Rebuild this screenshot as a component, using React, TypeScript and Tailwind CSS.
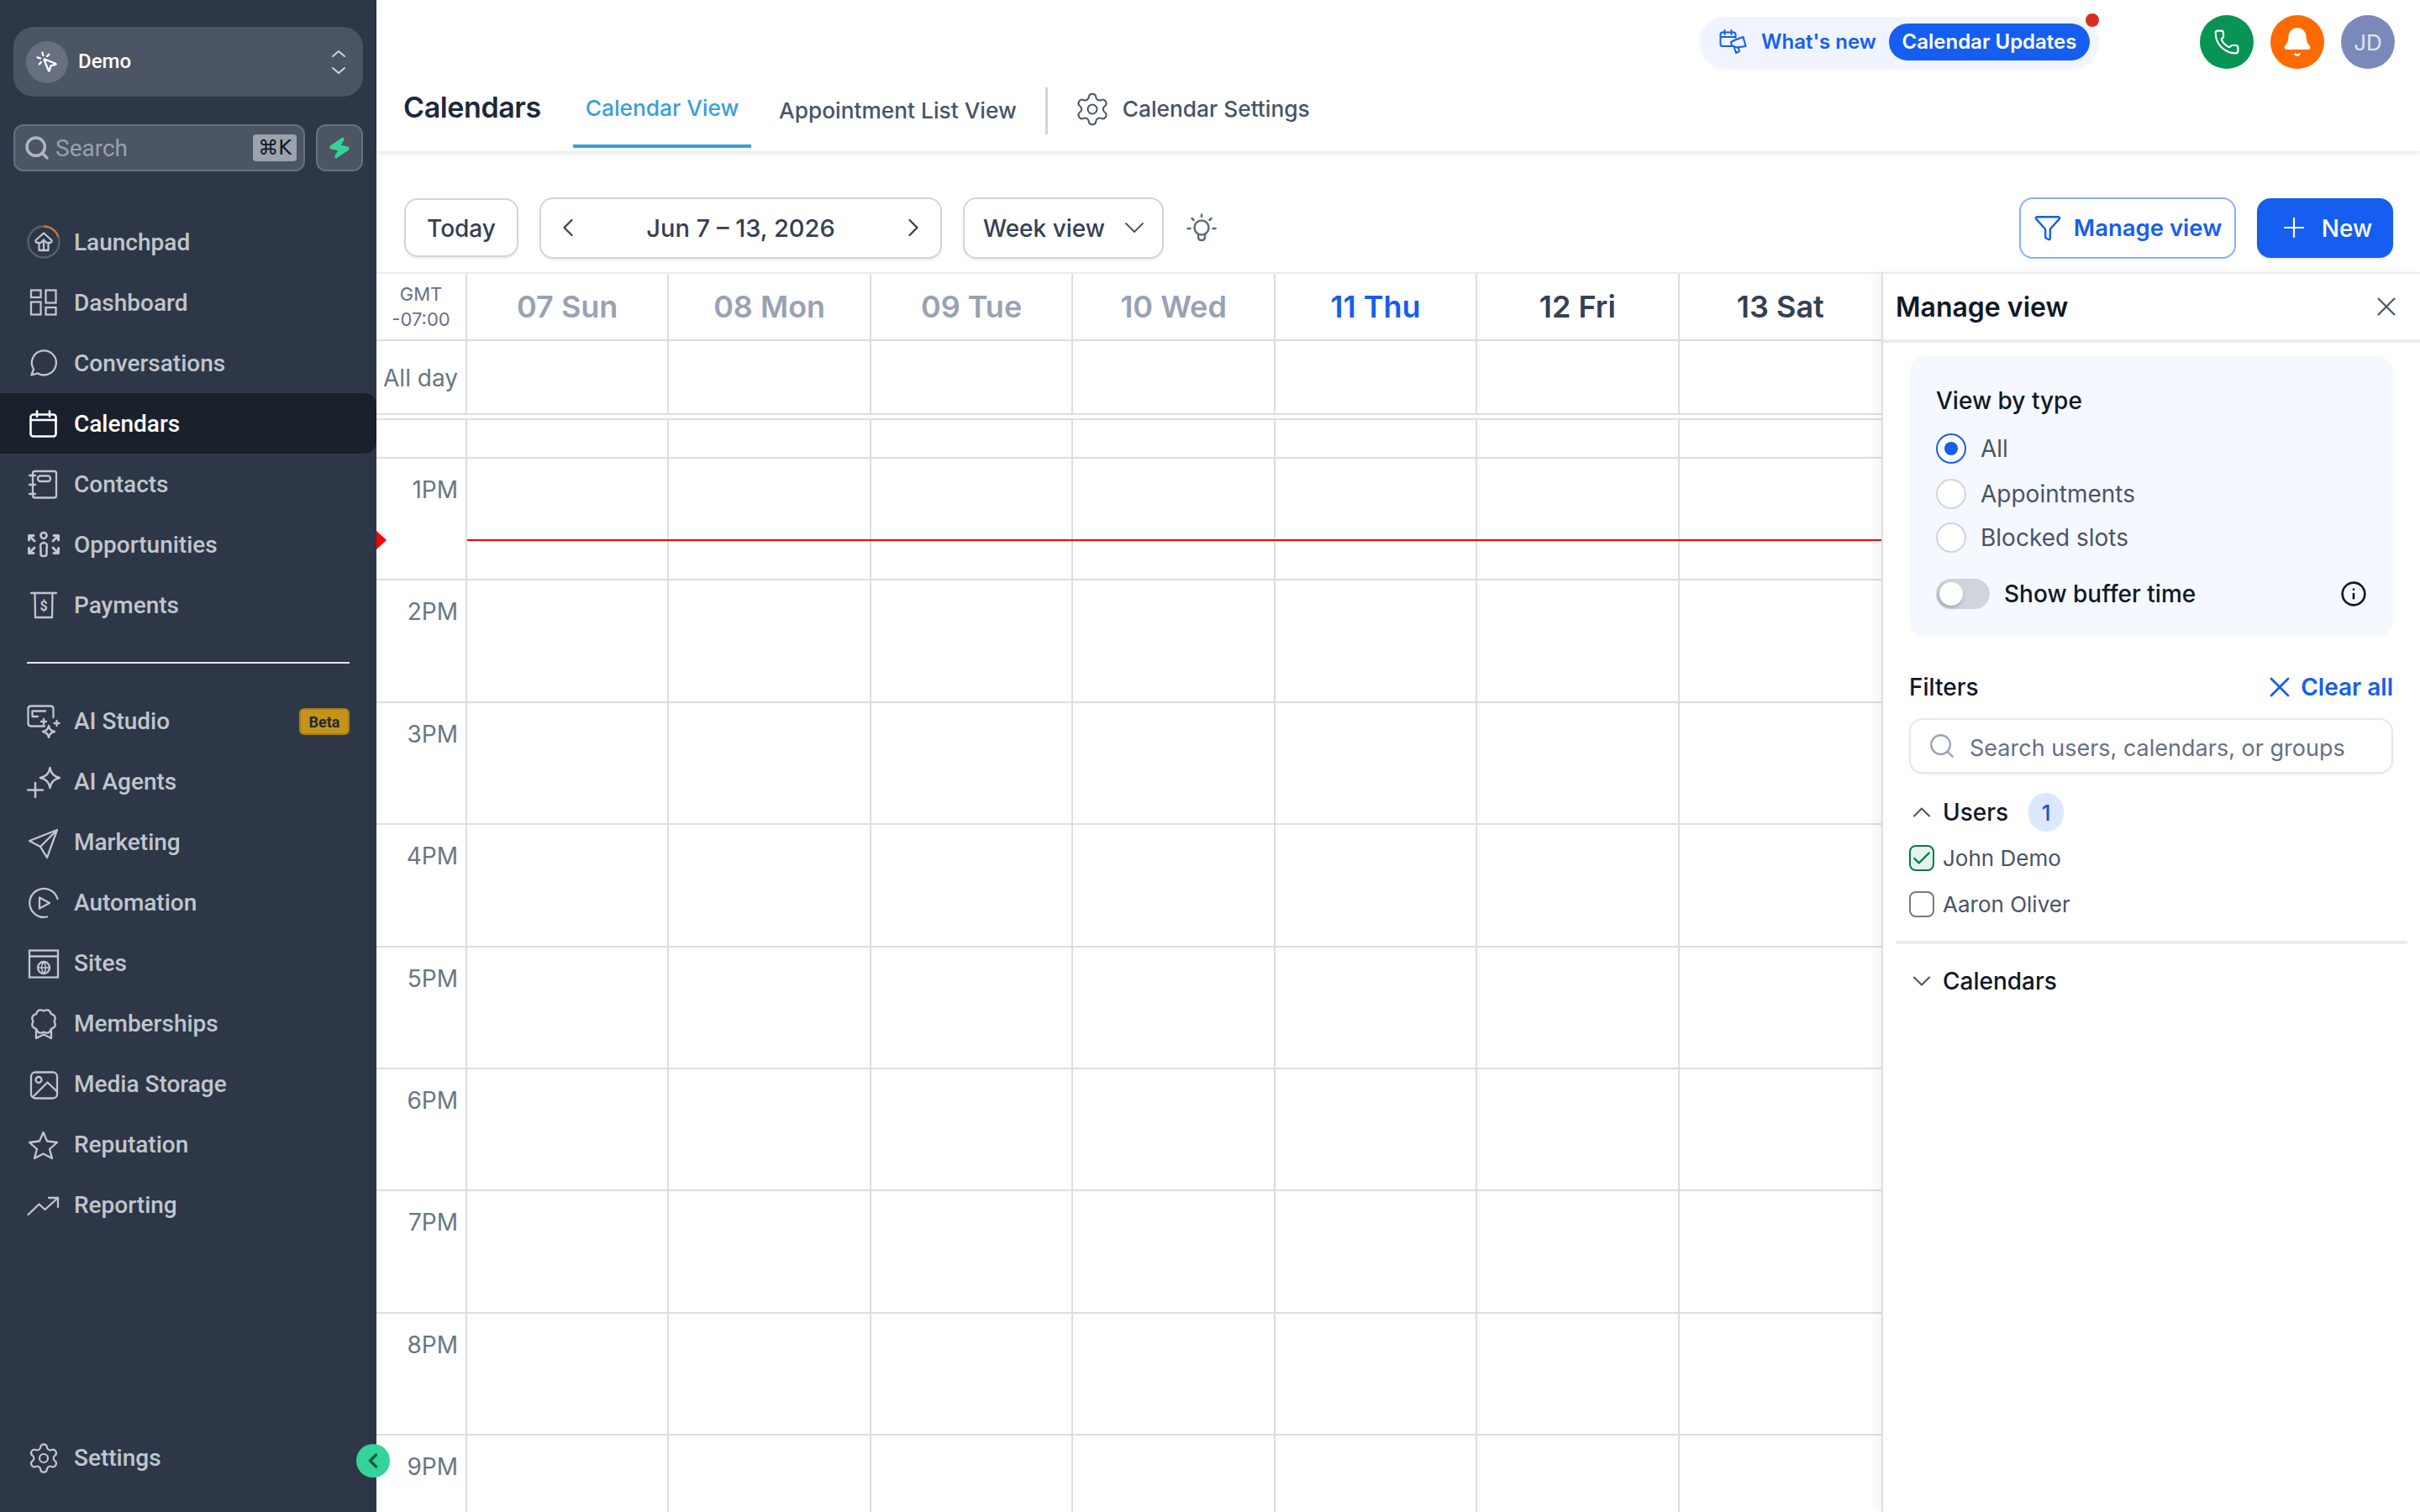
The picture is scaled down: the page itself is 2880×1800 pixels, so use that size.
import type { ReactNode } from 'react'
import {
  Bell, Check, ChevronDown, ChevronLeft, ChevronRight, ChevronUp, Funnel, Info,
  MousePointerClick, Phone, Plus, Search, Settings, X, Zap,
} from 'lucide-react'

function Ico({ children, white }: { children: ReactNode; white?: boolean }) {
  return (
    <svg
      viewBox="0 0 40 40"
      fill="none"
      stroke="currentColor"
      strokeWidth={white ? 2.6 : 2.3}
      strokeLinecap="round"
      strokeLinejoin="round"
      className="w-[40px] h-[40px] shrink-0"
    >
      {children}
    </svg>
  )
}

function scallop(cx: number, cy: number) {
  let d = ''
  for (let i = 0; i < 8; i++) {
    const a = (i / 8) * Math.PI * 2 - Math.PI / 2
    const b = ((i + 0.5) / 8) * Math.PI * 2 - Math.PI / 2
    const c = ((i + 1) / 8) * Math.PI * 2 - Math.PI / 2
    if (i === 0) d += `M${cx + 12.5 * Math.cos(a)} ${cy + 12.5 * Math.sin(a)}`
    d += `Q${cx + 17.5 * Math.cos(b)} ${cy + 17.5 * Math.sin(b)} ${cx + 12.5 * Math.cos(c)} ${cy + 12.5 * Math.sin(c)}`
  }
  return d + 'Z'
}

const launchpad = (
  <Ico>
    <circle cx="20" cy="20" r="18.5" stroke="#556070" />
    <path d="M20 1.5A18.5 18.5 0 0 1 37.5 14" stroke="#c2763a" strokeLinecap="butt" />
    <path d="M20 9.5 29.5 18Q30 20.5 28 21H25.5V30H14.5V21H12Q10 20.5 10.5 18ZM20 17.5 16.5 21M20 17.5 23.5 21M20 17.5V30" />
  </Ico>
)
const dashboard = (
  <Ico>
    <g strokeLinecap="butt" strokeLinejoin="miter">
      <rect x="5" y="5.5" width="11.5" height="8.5" />
      <rect x="22.5" y="5.5" width="12" height="15" />
      <rect x="5" y="19.5" width="11.5" height="15" />
      <rect x="22.5" y="26" width="12" height="8.5" />
    </g>
  </Ico>
)
const conversations = <Ico><path d="M8 27.5A14.5 14.5 0 1 1 13 32.4L5.5 34.5Z" /></Ico>
const calendars = (
  <Ico white>
    <rect x="4.5" y="9.5" width="30" height="26" rx="3" />
    <path d="M4.5 16H34.5M12 5.5V12M27 5.5V12" />
  </Ico>
)
const contacts = (
  <Ico>
    <rect x="7" y="5" width="28" height="31.5" rx="2.5" />
    <rect x="13" y="10.5" width="15" height="6.5" rx="3" />
    <path d="M3 10H10M3 21H10M3 32H10" />
  </Ico>
)
const opportunities = (
  <Ico>
    <g strokeWidth="3">
      <circle cx="20" cy="9.5" r="3.5" strokeWidth="2.6" />
      <path d="M16.5 32V25Q14.5 19 20 18Q25.5 19 23.5 25V32Q23.5 34 20 34Q16.5 34 16.5 32Z" strokeWidth="2.6" />
      <path d="M2.5 15V9.5H8M3 10 9 16M37.5 15V9.5H32M37 10 31 16M2.5 24.5V30.5H8M3 30 9 24M37.5 24.5V30.5H32M37 30 31 24" />
    </g>
  </Ico>
)
const payments = (
  <Ico>
    <path d="M5 6H35M9.5 6 10 35H30L30.5 6" strokeLinejoin="miter" />
    <text x="20" y="26.5" textAnchor="middle" fontSize="16" fontWeight="700" fill="currentColor" stroke="none" className="[font-family:Roboto,sans-serif]">$</text>
  </Ico>
)
const aiStudio = (
  <Ico>
    <path d="M21 25.5H5Q1.5 25.5 1.5 22V5Q1.5 1.5 5 1.5H28Q31.5 1.5 31.5 5V15M6.5 7.5H22M6.5 7.5V14H13M20 17V23M17 20H23M35.5 19V25M32.5 22H38.5" />
    <path d="M26 25Q27 31 33 32Q27 33 26 39Q25 33 19 32Q25 31 26 25Z" />
  </Ico>
)
const aiAgents = (
  <Ico>
    <path d="M27.5 3Q29 13 39 15Q29 17 27.5 27Q26 17 16 15Q26 13 27.5 3Z" strokeWidth="2.4" />
    <path d="M1 29.5H19M10 21V38" strokeWidth="2.6" />
  </Ico>
)
const marketing = <Ico><path d="M3 18 36 5 24 38 16 25ZM16 25 36 5" /></Ico>
const automation = (
  <Ico>
    <path d="M36.5 15A17 17 0 1 0 24 36.5" />
    <path d="M15 13.5 27 20 15 26.5Z" />
  </Ico>
)
const sites = (
  <Ico>
    <g strokeLinejoin="miter" strokeLinecap="butt">
      <rect x="3" y="4.5" width="34" height="32" />
      <path d="M3 11.5H37" />
      <circle cx="20" cy="25" r="7" />
      <path d="M13 25H27M20 18Q15 25 20 32Q25 25 20 18" strokeWidth="1.5" />
    </g>
  </Ico>
)
const memberships = (
  <Ico>
    <path d={scallop(20, 17)} />
    <path d="M11 28V37L20 32.5 29 37V28" />
  </Ico>
)
const media = (
  <Ico>
    <rect x="5" y="5.5" width="31" height="31" rx="5" />
    <circle cx="14" cy="14.5" r="3.5" />
    <path d="M7 35 24.5 17.5 35.5 28" />
  </Ico>
)
const reputation = <Ico><path d="M19.5 5 24 15.5 36 17 27 25 30 36 19.5 30.5 9 36 12 25 3 17 15 15.5Z" /></Ico>
const reporting = <Ico><path d="M1.5 31 14.5 18.5 21.5 25 37 11M26 11H37V22" /></Ico>

const topNav = [
  { label: 'Launchpad', icon: launchpad },
  { label: 'Dashboard', icon: dashboard },
  { label: 'Conversations', icon: conversations },
  { label: 'Calendars', icon: calendars, active: true },
  { label: 'Contacts', icon: contacts },
  { label: 'Opportunities', icon: opportunities },
  { label: 'Payments', icon: payments },
]

const lowerNav = [
  { label: 'AI Studio', icon: aiStudio, beta: true },
  { label: 'AI Agents', icon: aiAgents },
  { label: 'Marketing', icon: marketing },
  { label: 'Automation', icon: automation },
  { label: 'Sites', icon: sites },
  { label: 'Memberships', icon: memberships },
  { label: 'Media Storage', icon: media },
  { label: 'Reputation', icon: reputation },
  { label: 'Reporting', icon: reporting },
]

function NavRow({ label, icon, active, beta, nudge }: { label: string; icon: ReactNode; active?: boolean; beta?: boolean; nudge?: boolean }) {
  return (
    <div className={`h-[72px] flex items-center gap-4 pl-8 pr-8 rounded-r-[14px] text-[28px] font-medium ${active ? 'bg-[#1a202c] text-white' : 'text-[#c1c5cd]'}`}>
      {icon}
      <span className={`flex-1 ${nudge ? 'pt-[2px]' : ''}`}>{label}</span>
      {beta && (
        <span className="w-[60px] h-[32px] flex items-center justify-center rounded-[6px] bg-[#c4941a] border-2 border-[#a87d12] text-[#1e2a3a] text-[18px] font-bold">Beta</span>
      )}
    </div>
  )
}

function Sidebar() {
  return (
    <aside className="relative w-[448px] h-full shrink-0 bg-[#2d3748] flex flex-col [font-family:Roboto,sans-serif]">
      <div className="mx-4 mt-8 h-[83px] rounded-[24px] bg-[#4b5563] flex items-center pl-[15px] pr-5 text-white">
        <span className="w-[50px] h-[50px] rounded-full bg-[#667080] flex items-center justify-center">
          <MousePointerClick size={28} strokeWidth={2} />
        </span>
        <span className="ml-3 flex-1 text-[24px] font-medium pb-[2px]">Demo</span>
        <svg viewBox="0 0 18 30" fill="none" stroke="#d1d5db" strokeWidth="2" strokeLinecap="round" strokeLinejoin="round" className="w-[18px] h-[30px]">
          <path d="M2 8 9 2 16 8M2 22 9 28 16 22" />
        </svg>
      </div>
      <div className="mx-4 mt-[33px] flex gap-[13px]">
        <div className="w-[347px] h-[56px] rounded-[12px] bg-[#4b5563] border-2 border-[#667080] flex items-center pl-[10px] pr-[8px] text-[#98a0ad]">
          <Search size={32} strokeWidth={2.6} className="text-[#b0b6c0]" />
          <span className="ml-[6px] flex-1 text-[28px] pt-[2px]">Search</span>
          <span className="w-[52px] h-[32px] rounded-[4px] bg-[#9ca3af] text-[#111827] text-[24px] flex items-center justify-center [font-family:'DejaVu_Sans',sans-serif]">⌘K</span>
        </div>
        <div className="w-[56px] h-[56px] rounded-[12px] bg-[#4b5563] border-2 border-[#667080] flex items-center justify-center">
          <Zap size={28} className="text-[#34d399] fill-[#34d399] rotate-12" />
        </div>
      </div>
      <nav className="mt-[48px]">
        {topNav.map(item => <NavRow key={item.label} {...item} nudge />)}
      </nav>
      <div className="mx-8 mt-[32px] h-[2px] bg-[#e5e7eb]" />
      <nav className="mt-[33px]">
        {lowerNav.map(item => <NavRow key={item.label} {...item} />)}
      </nav>
      <div className="mt-auto mb-[28px]">
        <NavRow label="Settings" icon={<Settings size={40} strokeWidth={1.3} className="shrink-0" />} />
      </div>
      {/* collapse handle sits over the sidebar edge */}
      <button className="absolute left-[424px] top-[1719px] w-[40px] h-[40px] rounded-full bg-[#34d399] flex items-center justify-center text-[#0f5c48] z-20">
        <ChevronLeft size={28} strokeWidth={3} />
      </button>
    </aside>
  )
}

function TopBar() {
  return (
    <header className="h-[180px] shrink-0 bg-white shadow-[0_2px_6px_rgba(16,24,40,0.12)] relative z-10">
      <div className="h-[100px] flex items-center justify-end pr-[30px]">
        <div className="relative w-[474px] h-[60px] mr-[121px] rounded-full bg-[#eff4ff] shadow-[0_2px_4px_rgba(16,24,40,0.05)] flex items-center pl-[23px] text-[#155eef] text-[24px] font-semibold whitespace-nowrap">
          <svg viewBox="0 0 33 30" fill="none" stroke="currentColor" strokeWidth="2" strokeLinecap="round" strokeLinejoin="round" className="w-[33px] h-[30px] shrink-0">
            <path d="M15 20H4Q1.5 20 1.5 17.5V6Q1.5 3.5 4 3.5H17Q19.5 3.5 19.5 6V10M1.5 9H19.5M6.5 1V6M14.5 1V6" />
            <path d="M28.5 9 31.5 20 21 21.5 15 19.5 14 15 18 13ZM18 22 20 28 24 26 22.5 21" />
          </svg>
          <span className="ml-[17px] w-[136px] shrink-0">What's new</span>
          <span className="ml-[16px] w-[239px] h-[44px] shrink-0 rounded-full bg-[#155eef] text-white flex items-center justify-center">Calendar Updates</span>
          <span className="absolute left-[459px] top-[-4px] w-[16px] h-[16px] rounded-full bg-[#d92d20]" />
        </div>
        <div className="flex gap-5">
          <span className="w-[64px] h-[64px] rounded-full bg-[#079455] flex items-center justify-center text-white"><Phone size={32} strokeWidth={1.6} /></span>
          <span className="w-[64px] h-[64px] rounded-full bg-[#ff6a00] flex items-center justify-center text-white"><Bell size={38} fill="white" strokeWidth={1.4} /></span>
          <span className="w-[64px] h-[64px] rounded-full bg-[#7b88ba] flex items-center justify-center text-[#e3e6f0] text-[26px]">JD</span>
        </div>
      </div>
      <div className="h-[80px] flex items-start pl-[32px] text-[26.3px] font-medium">
        <h1 className="w-[202px] h-[54px] shrink-0 flex items-center text-[34px] font-semibold text-[#1d2939] tracking-[-0.4px]">Calendars</h1>
        <div className="w-[212px] h-[76px] shrink-0 border-b-4 border-[#38a0db] flex justify-center pt-[9px] text-[#38a0db]">Calendar View</div>
        <div className="ml-[33px] h-[76px] pt-[12px] text-[#475467]">Appointment List View</div>
        <div className="ml-[34px] mt-[4px] w-[3px] h-[56px] bg-[#d0d5dd]" />
        <div className="ml-[31px] mt-[8px] flex items-center gap-[14px] text-[#475467]">
          <Settings size={44} strokeWidth={1.1} />
          <span>Calendar Settings</span>
        </div>
      </div>
    </header>
  )
}

function Toolbar() {
  return (
    <div className="h-[144px] shrink-0 flex items-center pt-[38px] pl-[33px] pr-[32px] text-[#344054] text-[28px] font-medium">
      <button className="w-[136px] h-[70px] pt-[2px] rounded-[16px] border-2 border-[#d0d5dd] shadow-[0_2px_2px_rgba(16,24,40,0.08)]">Today</button>
      <div className="ml-[25px] w-[479px] h-[73px] rounded-[16px] border-2 border-[#d0d5dd] shadow-[0_2px_2px_rgba(16,24,40,0.08)] flex items-center justify-between px-[14px] text-[29px]">
        <ChevronLeft size={36} strokeWidth={1.5} />
        <span className="pt-[2px]">Jun 7 – 13, 2026</span>
        <ChevronRight size={36} strokeWidth={1.5} />
      </div>
      <div className="ml-[25px] w-[239px] h-[73px] rounded-[16px] border-2 border-[#d0d5dd] shadow-[0_2px_2px_rgba(16,24,40,0.08)] flex items-center justify-between pl-[22px] pr-[13px]">
        <span className="pt-[2px]">Week view</span>
        <ChevronDown size={40} strokeWidth={1.1} className="text-[#475467]" />
      </div>
      <svg viewBox="0 0 40 40" fill="none" stroke="#5f6e76" strokeWidth="2.5" strokeLinecap="round" className="ml-[25px] mt-[2px] w-[40px] h-[40px]">
        <circle cx="20" cy="19" r="8.5" />
        <path d="M16 26.5V30Q16 34 20 34Q24 34 24 30V26.5" />
        <path d="M20 3.5V6M8.5 8 10.5 10M31.5 8 29.5 10M3.5 20H6.5M33.5 20H36.5" />
      </svg>
      <div className="ml-auto flex items-center gap-[25px] text-[27.5px] font-semibold">
        <button className="w-[258px] h-[73px] rounded-[16px] border-2 border-[#84adff] text-[#155eef] flex items-center justify-center gap-[14px]">
          <Funnel size={34} strokeWidth={1.7} />
          <span className="pt-[2px]">Manage view</span>
        </button>
        <button className="w-[162px] h-[71px] rounded-[16px] bg-[#155eef] text-white flex items-center justify-center gap-[14px] shadow-[0_2px_2px_rgba(16,24,40,0.1)]">
          <Plus size={38} strokeWidth={1.4} />
          <span className="font-medium text-[28px] pt-[2px]">New</span>
        </button>
      </div>
    </div>
  )
}

const days = [
  { label: '07 Sun', color: 'text-[#98a2b3]' },
  { label: '08 Mon', color: 'text-[#98a2b3]' },
  { label: '09 Tue', color: 'text-[#98a2b3]' },
  { label: '10 Wed', color: 'text-[#98a2b3]' },
  { label: '11 Thu', color: 'text-[#155eef]' },
  { label: '12 Fri', color: 'text-[#344054]' },
  { label: '13 Sat', color: 'text-[#344054]' },
]
const hours = ['1PM', '2PM', '3PM', '4PM', '5PM', '6PM', '7PM', '8PM', '9PM']

function Cells() {
  return (
    <>
      {days.map((d, i) => (
        <div key={d.label} className={i < 6 ? 'border-r-2 border-[#dedede]' : ''} />
      ))}
    </>
  )
}

function CalendarGrid() {
  const rowCls = 'grid grid-cols-[108px_repeat(7,1fr)]'
  return (
    <div className="relative flex-1 min-w-0 overflow-hidden">
      <div className={`${rowCls} h-[82px] border-t-2 border-t-[#eaecf0] border-b-2 border-b-[#dedede]`}>
        <div className="border-r-2 border-[#dedede] flex flex-col items-center justify-center text-[22px] leading-[30px] text-[#667085]">
          <span>GMT</span>
          <span>-07:00</span>
        </div>
        {days.map((d, i) => (
          <div key={d.label} className={`flex items-center justify-center text-[36px] font-semibold ${d.color} ${i < 6 ? 'border-r-2 border-[#dedede]' : ''}`}>
            {d.label}
          </div>
        ))}
      </div>
      <div className={`${rowCls} h-[88px] border-b-2 border-[#dedede]`}>
        <div className="border-r-2 border-[#dedede] flex items-center justify-end pr-[9px] pt-[2px] text-[28px] text-[#667782]">All day</div>
        <Cells />
      </div>
      <div className="mt-[4px]">
        <div className={`${rowCls} h-[48px] border-t-2 border-b-2 border-[#dedede]`}>
          <div className="border-r-2 border-[#dedede]" />
          <Cells />
        </div>
        {hours.map(h => (
          <div key={h} className={`${rowCls} h-[145.4px] border-b-2 border-[#dedede]`}>
            <div className="border-r-2 border-[#dedede] flex justify-end pr-[9px] pt-[20px] text-[28px] leading-[34px] text-[#667782]">{h}</div>
            <Cells />
          </div>
        ))}
      </div>
      {/* current time marker */}
      <div className="absolute left-[108px] right-0 top-[318px] h-[2px] bg-[#ff0000]" />
      <div className="absolute left-0 top-[308px] w-0 h-0 border-y-[11px] border-y-transparent border-l-[12px] border-l-[#ff0000]" />
    </div>
  )
}

function Radio({ label, checked }: { label: string; checked?: boolean }) {
  return (
    <div className="flex items-center gap-[17px] h-[36px] text-[28px] text-[#475467]">
      <span className={`w-[36px] h-[36px] rounded-full bg-white border-2 flex items-center justify-center ${checked ? 'border-[#155eef]' : 'border-[#d0d5dd]'}`}>
        {checked && <span className="w-[16px] h-[16px] rounded-full bg-[#155eef]" />}
      </span>
      <span>{label}</span>
    </div>
  )
}

function ManagePanel() {
  return (
    <aside className="w-[641px] shrink-0 bg-white border-l-2 border-[#dedede] shadow-[-6px_0_12px_rgba(16,24,40,0.05)] flex flex-col relative z-[5]">
      <div className="h-[84px] shrink-0 border-t-2 border-t-[#eaecf0] border-b-4 border-b-[#eaecf0] flex items-center justify-between pl-[15px] pr-[21px]">
        <span className="text-[32px] font-semibold text-[#101828] pt-[2px]">Manage view</span>
        <X size={38} strokeWidth={1.3} className="text-[#475467]" />
      </div>
      <div className="pl-[31px] pr-[32px] pt-[16px]">
        <div className="h-[334px] rounded-[20px] bg-[#f5f8ff] pl-[32px] pr-[30px] pt-[38px]">
          <div className="h-[30px] flex items-center text-[28px] font-medium text-[#101828]">View by type</div>
          <div className="mt-[24px]"><Radio label="All" checked /></div>
          <div className="mt-[18px]"><Radio label="Appointments" /></div>
          <div className="mt-[16px]"><Radio label="Blocked slots" /></div>
          <div className="mt-[28px] flex items-center text-[28px] font-medium text-[#101828]">
            <span className="w-[64px] h-[36px] rounded-full bg-[#d0d5dd] flex items-center pl-[4px]">
              <span className="w-[28px] h-[28px] rounded-full bg-white shadow-[-1px_2px_4px_rgba(16,24,40,0.3)]" />
            </span>
            <span className="ml-[17px] flex-1">Show buffer time</span>
            <Info size={32} strokeWidth={2} className="mr-[1px]" />
          </div>
        </div>
        <div className="mt-[40px] h-[40px] flex items-center justify-between text-[28px] font-medium">
          <span className="text-[#101828]">Filters</span>
          <span className="flex items-center gap-[5px] text-[#155eef] font-semibold">
            <X size={40} strokeWidth={1.6} />
            Clear all
          </span>
        </div>
        <div className="mt-[17px] h-[66px] rounded-[16px] border-2 border-[#e4e7ec] shadow-[0_1px_2px_rgba(16,24,40,0.08)] flex items-center pl-[20px] text-[27px] text-[#667085]">
          <Search size={34} strokeWidth={1.6} className="text-[#98a2b3]" />
          <span className="ml-[16px] pt-[6px]">Search users, calendars, or groups</span>
        </div>
        <div className="mt-[23px] h-[46px] flex items-center text-[28px] font-medium text-[#101828]">
          <span className="w-[30px] flex justify-center text-[#475467]"><ChevronUp size={36} strokeWidth={1.4} className="shrink-0" /></span>
          <span className="ml-[10px]">Users</span>
          <span className="ml-[24px] w-[42px] h-[46px] rounded-full bg-[#dbe8ff] text-[#1d4ed8] text-[26px] flex items-center justify-center">1</span>
        </div>
        <div className="mt-[16px] h-[31px] flex items-center gap-[10px] text-[26px] text-[#475467]">
          <span className="w-[30px] h-[31px] rounded-[8px] border-2 border-[#067a46] bg-[#e6f2ec] flex items-center justify-center text-[#067a46]"><Check size={26} strokeWidth={2.2} /></span>
          <span>John Demo</span>
        </div>
        <div className="mt-[24px] h-[31px] flex items-center gap-[10px] text-[26px] text-[#475467]">
          <span className="w-[30px] h-[31px] rounded-[8px] border-2 border-[#7a7a7a] bg-white" />
          <span>Aaron Oliver</span>
        </div>
        <div className="mt-[28px] -ml-[15px] -mr-[17px] h-[4px] bg-[#eaecf0]" />
        <div className="mt-[28px] h-[32px] flex items-center text-[28px] font-medium text-[#101828]">
          <span className="w-[30px] flex justify-center text-[#475467]"><ChevronDown size={36} strokeWidth={1.4} className="shrink-0" /></span>
          <span className="ml-[10px]">Calendars</span>
        </div>
      </div>
    </aside>
  )
}

export default function App() {
  return (
    <div className="w-[2880px] h-[1800px] overflow-hidden flex bg-white [font-family:Inter,sans-serif]">
      <Sidebar />
      <main className="flex-1 min-w-0 flex flex-col">
        <TopBar />
        <Toolbar />
        <div className="flex-1 min-h-0 flex">
          <CalendarGrid />
          <ManagePanel />
        </div>
      </main>
    </div>
  )
}
